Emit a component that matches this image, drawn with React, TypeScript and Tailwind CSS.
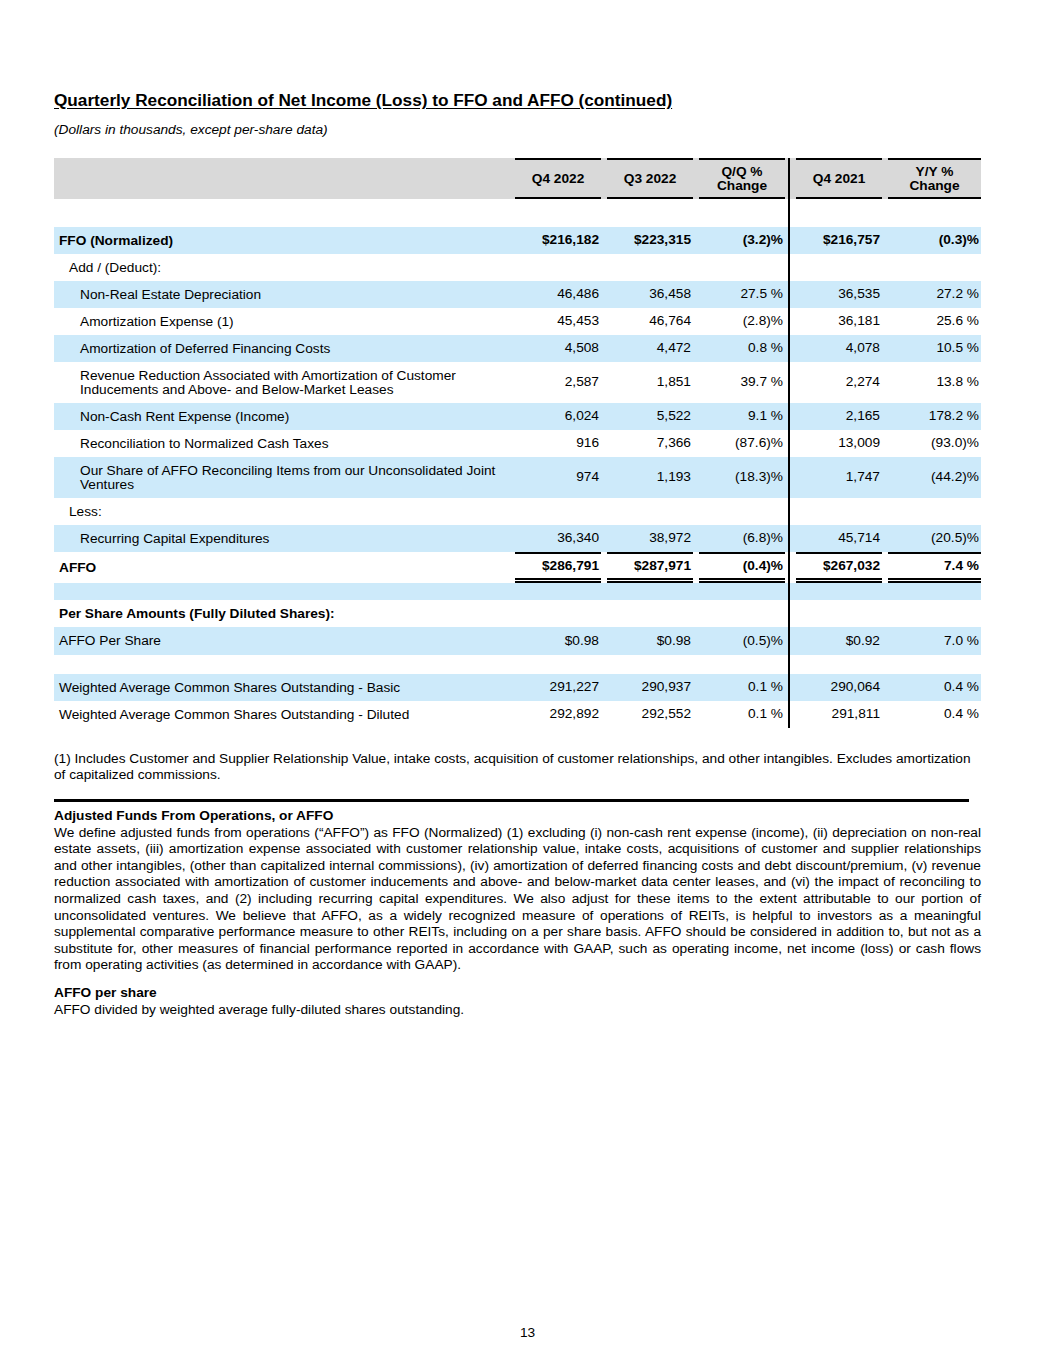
import React from 'react';

type Row = {
  label?: React.ReactNode;
  values?: string[];
  blue?: boolean;
  bold?: boolean;
  indent?: 0 | 1 | 2;
  h?: string;
  total?: boolean;
};

const rows: Row[] = [
  { h: 'h-[28px]' },
  { label: 'FFO (Normalized)', values: ['$216,182', '$223,315', '(3.2)%', '$216,757', '(0.3)%'], blue: true, bold: true },
  { label: 'Add / (Deduct):', indent: 1 },
  { label: 'Non-Real Estate Depreciation', values: ['46,486', '36,458', '27.5 %', '36,535', '27.2 %'], blue: true, indent: 2 },
  { label: 'Amortization Expense (1)', values: ['45,453', '46,764', '(2.8)%', '36,181', '25.6 %'], indent: 2 },
  { label: 'Amortization of Deferred Financing Costs', values: ['4,508', '4,472', '0.8 %', '4,078', '10.5 %'], blue: true, indent: 2 },
  {
    label: (
      <>
        Revenue Reduction Associated with Amortization of Customer
        <br />
        Inducements and Above- and Below-Market Leases
      </>
    ),
    values: ['2,587', '1,851', '39.7 %', '2,274', '13.8 %'],
    indent: 2,
    h: 'h-[41px]',
  },
  { label: 'Non-Cash Rent Expense (Income)', values: ['6,024', '5,522', '9.1 %', '2,165', '178.2 %'], blue: true, indent: 2 },
  { label: 'Reconciliation to Normalized Cash Taxes', values: ['916', '7,366', '(87.6)%', '13,009', '(93.0)%'], indent: 2 },
  {
    label: (
      <>
        Our Share of AFFO Reconciling Items from our Unconsolidated Joint
        <br />
        Ventures
      </>
    ),
    values: ['974', '1,193', '(18.3)%', '1,747', '(44.2)%'],
    blue: true,
    indent: 2,
    h: 'h-[41px]',
  },
  { label: 'Less:', indent: 1 },
  { label: 'Recurring Capital Expenditures', values: ['36,340', '38,972', '(6.8)%', '45,714', '(20.5)%'], blue: true, indent: 2 },
  { label: 'AFFO', values: ['$286,791', '$287,971', '(0.4)%', '$267,032', '7.4 %'], bold: true, total: true, h: 'h-[31px]' },
  { blue: true, h: 'h-[17px]' },
  { label: 'Per Share Amounts (Fully Diluted Shares):', bold: true },
  { label: 'AFFO Per Share', values: ['$0.98', '$0.98', '(0.5)%', '$0.92', '7.0 %'], blue: true, h: 'h-[28px]' },
  { h: 'h-[19px]' },
  { label: 'Weighted Average Common Shares Outstanding - Basic', values: ['291,227', '290,937', '0.1 %', '290,064', '0.4 %'], blue: true },
  { label: 'Weighted Average Common Shares Outstanding - Diluted', values: ['292,892', '292,552', '0.1 %', '291,811', '0.4 %'] },
];

const grid = 'grid grid-cols-[455px_92px_92px_92px_5px_92px_99px]';
const indents = ['pl-[5px]', 'pl-[15px]', 'pl-[26px]'];

function Divider() {
  return (
    <div className="flex justify-end">
      <div className="w-[2px] bg-black" />
    </div>
  );
}

function NumCell({ v, total }: { v?: string; total?: boolean }) {
  return (
    <div className="pl-[6px]">
      <div
        className={`h-full flex items-center justify-end pr-[2px] border-black whitespace-nowrap ${
          total ? 'border-t-2 border-b-[5px] [border-bottom-style:double]' : ''
        }`}
      >
        {v}
      </div>
    </div>
  );
}

function TableRow({ r }: { r: Row }) {
  const v = r.values ?? ['', '', '', '', ''];
  return (
    <div className={`${grid} ${r.h ?? 'h-[27px]'} ${r.blue ? 'bg-[#cdeafa]' : ''} ${r.bold ? 'font-bold' : ''}`}>
      <div className={`flex items-center leading-[14px] whitespace-nowrap ${indents[r.indent ?? 0]}`}>{r.label}</div>
      <NumCell v={v[0]} total={r.total} />
      <NumCell v={v[1]} total={r.total} />
      <NumCell v={v[2]} total={r.total} />
      <Divider />
      <NumCell v={v[3]} total={r.total} />
      <NumCell v={v[4]} total={r.total} />
    </div>
  );
}

function HeadCell({ children }: { children: React.ReactNode }) {
  return (
    <div className="pl-[6px]">
      <div className="h-full flex items-center justify-center text-center border-y-2 border-black leading-[14px]">
        {children}
      </div>
    </div>
  );
}

const para = [
  'We define adjusted funds from operations (“AFFO”) as FFO (Normalized) (1) excluding (i) non-cash rent expense (income), (ii) depreciation on non-real',
  'estate assets, (iii) amortization expense associated with customer relationship value, intake costs, acquisitions of customer and supplier relationships',
  'and other intangibles, (other than capitalized internal commissions), (iv) amortization of deferred financing costs and debt discount/premium, (v) revenue',
  'reduction associated with amortization of customer inducements and above- and below-market data center leases, and (vi) the impact of reconciling to',
  'normalized cash taxes, and (2) including recurring capital expenditures. We also adjust for these items to the extent attributable to our portion of',
  'unconsolidated ventures. We believe that AFFO, as a widely recognized measure of operations of REITs, is helpful to investors as a meaningful',
  'supplemental comparative performance measure to other REITs, including on a per share basis. AFFO should be considered in addition to, but not as a',
  'substitute for, other measures of financial performance reported in accordance with GAAP, such as operating income, net income (loss) or cash flows',
];

export default function App() {
  return (
    <div className="w-[1055px] h-[1365px] bg-white text-black font-['Liberation_Sans',Arial,sans-serif] text-[13.7px] flex flex-col">
      <div className="pl-[54px] pr-[74px] pt-[91px] flex-1">
        <h1 className="text-[17.2px] leading-[19px] font-bold underline underline-offset-2">
          Quarterly Reconciliation of Net Income (Loss) to FFO and AFFO (continued)
        </h1>
        <p className="italic leading-[16px] mt-[12px]">(Dollars in thousands, except per-share data)</p>

        <div className="mt-[20px]">
          <div className={`${grid} h-[41px] bg-[#d9d9d9] font-bold`}>
            <div />
            <HeadCell>Q4 2022</HeadCell>
            <HeadCell>Q3 2022</HeadCell>
            <HeadCell>
              Q/Q %<br />
              Change
            </HeadCell>
            <Divider />
            <HeadCell>Q4 2021</HeadCell>
            <HeadCell>
              Y/Y %<br />
              Change
            </HeadCell>
          </div>
          {rows.map((r, i) => (
            <TableRow key={i} r={r} />
          ))}
        </div>

        <p className="leading-[16px] mt-[23px]">
          (1) Includes Customer and Supplier Relationship Value, intake costs, acquisition of customer relationships, and other intangibles. Excludes amortization
          <br />
          of capitalized commissions.
        </p>

        <div className="mt-[16px] mr-[12px] h-[3px] bg-black" />

        <div className="mt-[6px] leading-[16.6px]">
          <div className="font-bold">Adjusted Funds From Operations, or AFFO</div>
          {para.map((line, i) => (
            <div key={i} className="text-justify [text-align-last:justify] whitespace-nowrap">
              {line}
            </div>
          ))}
          <div>from operating activities (as determined in accordance with GAAP).</div>
        </div>

        <div className="mt-[11px] leading-[16.6px]">
          <div className="font-bold">AFFO per share</div>
          <div>AFFO divided by weighted average fully-diluted shares outstanding.</div>
        </div>
      </div>
      <div className="text-center pb-[24px] leading-[16px]">13</div>
    </div>
  );
}
